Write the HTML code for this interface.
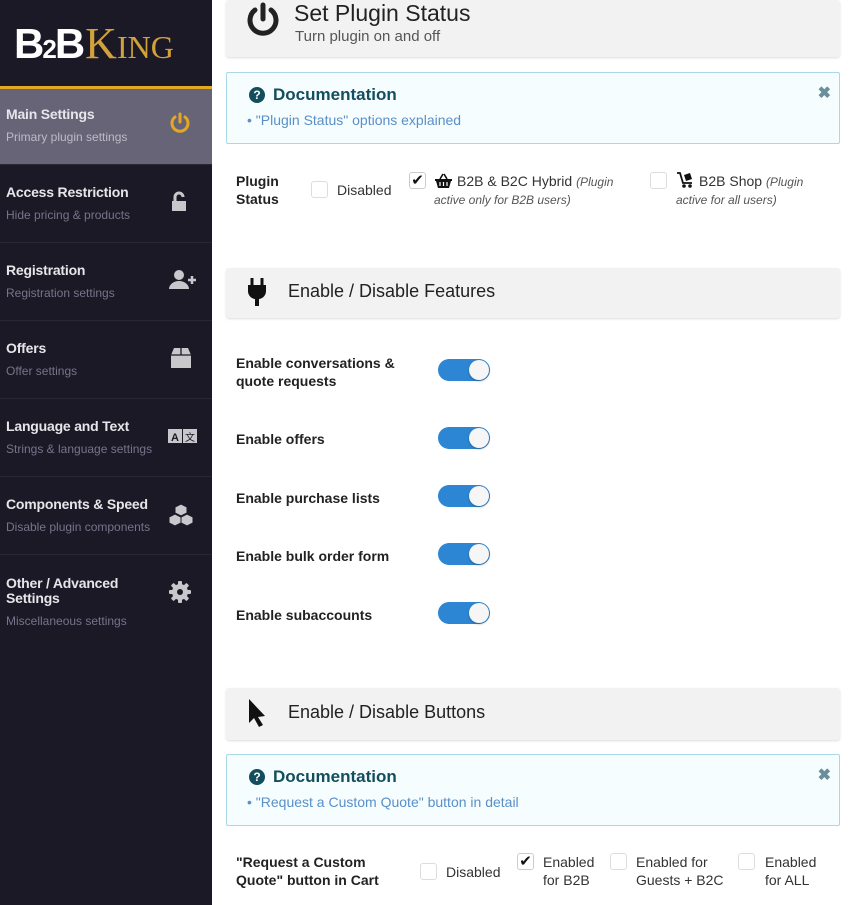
<!DOCTYPE html>
<html><head><meta charset="utf-8"><style>
*{box-sizing:border-box;margin:0;padding:0}
body{width:851px;height:905px;overflow:hidden;background:#fff;font-family:"Liberation Sans",sans-serif;position:relative;color:#222}
.sb{position:absolute;left:0;top:0;width:212px;height:905px;background:#1b1926}
.logo{position:absolute;left:14px;top:18px;font-weight:bold;font-size:42px;color:#fff;letter-spacing:-2px;white-space:nowrap}
.logo .k{font-family:"Liberation Serif",serif;font-weight:normal;color:#d2a23a;font-size:44px;letter-spacing:0;margin-left:2px}
.logo .k small{font-size:32px}
.bar{position:absolute;left:0;top:86px;width:212px;height:3px;background:#e2a823}
.it{position:absolute;left:0;width:212px;height:78px;border-bottom:1px solid #2a2735}
.it .t{position:absolute;left:6px;top:20px;font-size:14px;font-weight:bold;color:#e6e6ea;line-height:15px;letter-spacing:-0.2px}
.it .s{position:absolute;left:6px;top:43px;font-size:12px;color:#77748a}
.it svg{position:absolute;left:168px;top:25px}
.act{background:#686478}
.act .s{color:#bdbac8}
.hd{position:absolute;left:226px;width:614px;background:#f2f2f3;border-radius:3px;box-shadow:0 1px 2px #ddd}
.doc{position:absolute;left:226px;width:614px;height:72px;background:#f5fdfe;border:1px solid #a9d8e6;border-radius:2px}
.doc .h{position:absolute;left:22px;top:12px;font-size:17px;color:#134e5e;font-weight:bold;display:flex;align-items:center;gap:8px}
.doc .q{width:16px;height:16px;border-radius:50%;background:#134e5e;color:#fff;font-size:12px;text-align:center;line-height:16px}
.doc .l{position:absolute;left:20px;top:39px;font-size:14px;color:#5a8fc8}
.doc .x{position:absolute;right:8px;top:10px;color:#6b8f9a;font-size:16px;font-weight:bold}
.cb{position:absolute;width:17px;height:17px;border:1px solid #ddd;border-radius:3px;background:#fff}
.ck{font-size:15px;line-height:15px;text-align:center;color:#111;border-color:#ccc}
.lbl{position:absolute;font-size:14px;color:#333;line-height:18px}
.b{font-weight:bold;color:#222}
.tg{position:absolute;left:438px;width:52px;height:22px;border-radius:11px;background:#2d86d3}
.tg:after{content:"";position:absolute;right:1px;top:1px;width:20px;height:20px;border-radius:50%;background:#f6f6f6;box-shadow:0 1px 2px rgba(0,0,0,.3)}
.fl{position:absolute;left:236px;font-size:14px;font-weight:bold;color:#222;line-height:18px}
.ht{position:absolute;left:288px;font-size:18px;color:#222}
</style></head><body>
<div class="sb">
<div class="logo">B<span style="font-size:26px">2</span>B<span class="k">K<small>ING</small></span></div>
<div class="bar"></div>
<div class="it act" style="top:89px;height:76px"><div class="t" style="top:18px">Main Settings</div><div class="s" style="top:41px">Primary plugin settings</div>
<svg width="24" height="24" viewBox="0 0 24 24" style="top:22px"><path d="M7 6a8 8 0 1 0 10 0" fill="none" stroke="#e2a823" stroke-width="3" stroke-linecap="round"/><path d="M12 3v8" stroke="#e2a823" stroke-width="3" stroke-linecap="round"/></svg></div>
<div class="it" style="top:165px"><div class="t">Access Restriction</div><div class="s">Hide pricing &amp; products</div>
<svg width="24" height="24" viewBox="0 0 24 24"><path d="M4 11h14v10H4z" fill="#c8c8cc"/><path d="M7 11V7a4 4 0 0 1 8 0" fill="none" stroke="#c8c8cc" stroke-width="3"/></svg></div>
<div class="it" style="top:243px"><div class="t">Registration</div><div class="s">Registration settings</div>
<svg width="30" height="24" viewBox="0 0 30 24"><circle cx="11" cy="7" r="5" fill="#c8c8cc"/><path d="M1 21a10 8 0 0 1 20 0z" fill="#c8c8cc"/><path d="M24 8v8M20 12h8" stroke="#c8c8cc" stroke-width="2.5"/></svg></div>
<div class="it" style="top:321px"><div class="t">Offers</div><div class="s">Offer settings</div>
<svg width="26" height="24" viewBox="0 0 26 24"><path d="M3 9l3-7h14l3 7v13H3z" fill="#c8c8cc"/><path d="M3 9h20M13 2v7" stroke="#1b1926" stroke-width="1.3"/></svg></div>
<div class="it" style="top:399px"><div class="t">Language and Text</div><div class="s">Strings &amp; language settings</div>
<svg width="30" height="24" viewBox="0 0 30 24"><rect x="0" y="5" width="14" height="14" fill="#c8c8cc"/><rect x="15" y="5" width="14" height="14" fill="#c8c8cc"/><text x="3" y="17" font-size="11" font-weight="bold" fill="#1b1926" font-family="Liberation Sans">A</text><text x="17" y="17" font-size="10" fill="#1b1926" font-family="Noto Sans CJK SC">文</text></svg></div>
<div class="it" style="top:477px"><div class="t">Components &amp; Speed</div><div class="s">Disable plugin components</div>
<svg width="26" height="26" viewBox="0 0 26 26"><path d="M13 2l6 3v6l-6 3-6-3V5zM7 12l6 3v6l-6 3-6-3v-6zM19 12l6 3v6l-6 3-6-3v-6z" fill="#c8c8cc" stroke="#1b1926" stroke-width="1"/></svg></div>
<div class="it" style="top:555px;height:86px;border:0"><div class="t" style="top:21px">Other / Advanced<br>Settings</div><div class="s" style="top:59px">Miscellaneous settings</div>
<svg width="24" height="24" viewBox="0 0 24 24" style="top:25px"><g fill="#c8c8cc"><rect x="10" y="1" width="4" height="22" rx="1"/><rect x="10" y="1" width="4" height="22" rx="1" transform="rotate(45 12 12)"/><rect x="10" y="1" width="4" height="22" rx="1" transform="rotate(90 12 12)"/><rect x="10" y="1" width="4" height="22" rx="1" transform="rotate(135 12 12)"/><circle cx="12" cy="12" r="8"/></g><circle cx="12" cy="12" r="3" fill="#1b1926"/></svg></div>
</div>

<div class="hd" style="top:0;height:57px"></div>
<svg style="position:absolute;left:244px;top:2px" width="38" height="38" viewBox="0 0 38 38"><path d="M11 8a13 13 0 1 0 16 0" fill="none" stroke="#222" stroke-width="5" stroke-linecap="round"/><path d="M19 3v14" stroke="#222" stroke-width="5" stroke-linecap="round"/></svg>
<div style="position:absolute;left:294px;top:0;font-size:23px;color:#222">Set Plugin Status</div>
<div style="position:absolute;left:295px;top:28px;font-size:15px;color:#555">Turn plugin on and off</div>

<div class="doc" style="top:72px"><div class="h"><span class="q">?</span>Documentation</div><div class="l">• "Plugin Status" options explained</div><div class="x">✖</div></div>

<div class="lbl b" style="left:236px;top:172px">Plugin<br>Status</div>
<div class="cb" style="left:311px;top:181px"></div><div class="lbl" style="left:337px;top:181px">Disabled</div>
<div class="cb ck" style="left:409px;top:172px">✔</div>
<svg style="position:absolute;left:435px;top:173px" width="17" height="15" viewBox="0 0 17 15"><path d="M5 6l3-5M12 6L9 1" stroke="#111" stroke-width="1.6"/><path d="M0 6h17v2h-1l-2 7H3L1 8H0z" fill="#111"/><path d="M5 9v4M8.5 9v4M12 9v4" stroke="#fff" stroke-width="1.2"/></svg>
<div class="lbl" style="left:457px;top:172px">B2B &amp; B2C Hybrid <i style="font-size:12px;color:#555">(Plugin</i></div>
<div class="lbl" style="left:434px;top:190px"><i style="font-size:12px;color:#555">active only for B2B users)</i></div>
<div class="cb" style="left:650px;top:172px"></div>
<svg style="position:absolute;left:676px;top:171px" width="18" height="17" viewBox="0 0 18 17"><path d="M1 2h3l3 10h9" fill="none" stroke="#111" stroke-width="1.8"/><path d="M8 4l6-2 2 6-6 2z" fill="#111"/><circle cx="8" cy="15" r="1.8" fill="#111"/><circle cx="14" cy="15" r="1.8" fill="#111"/></svg>
<div class="lbl" style="left:699px;top:172px">B2B Shop <i style="font-size:12px;color:#555">(Plugin</i></div>
<div class="lbl" style="left:676px;top:190px"><i style="font-size:12px;color:#555">active for all users)</i></div>

<div class="hd" style="top:268px;height:50px"></div>
<svg style="position:absolute;left:246px;top:277px" width="22" height="30" viewBox="0 0 22 30"><path d="M6 1v7M16 1v7" stroke="#111" stroke-width="3"/><path d="M2 8h18v6a8 8 0 0 1-7 8v7h-4v-7a8 8 0 0 1-7-8z" fill="#111"/></svg>
<div class="ht" style="top:281px">Enable / Disable Features</div>

<div class="fl" style="top:354px">Enable conversations &amp;<br>quote requests</div><div class="tg" style="top:359px"></div>
<div class="fl" style="top:430px">Enable offers</div><div class="tg" style="top:427px"></div>
<div class="fl" style="top:489px">Enable purchase lists</div><div class="tg" style="top:485px"></div>
<div class="fl" style="top:547px">Enable bulk order form</div><div class="tg" style="top:543px"></div>
<div class="fl" style="top:606px">Enable subaccounts</div><div class="tg" style="top:602px"></div>

<div class="hd" style="top:688px;height:52px"></div>
<svg style="position:absolute;left:246px;top:698px" width="22" height="30" viewBox="0 0 22 30"><path d="M3 1v24l5-5 5 9 4-2-5-8 7-1z" fill="#111"/></svg>
<div class="ht" style="top:702px">Enable / Disable Buttons</div>

<div class="doc" style="top:754px"><div class="h"><span class="q">?</span>Documentation</div><div class="l">• "Request a Custom Quote" button in detail</div><div class="x">✖</div></div>

<div class="lbl b" style="left:236px;top:853px">"Request a Custom<br>Quote" button in Cart</div>
<div class="cb" style="left:420px;top:863px"></div><div class="lbl" style="left:446px;top:863px">Disabled</div>
<div class="cb ck" style="left:517px;top:853px">✔</div><div class="lbl" style="left:543px;top:853px">Enabled<br>for B2B</div>
<div class="cb" style="left:610px;top:853px"></div><div class="lbl" style="left:636px;top:853px">Enabled for<br>Guests + B2C</div>
<div class="cb" style="left:738px;top:853px"></div><div class="lbl" style="left:765px;top:853px">Enabled<br>for ALL</div>
</body></html>
